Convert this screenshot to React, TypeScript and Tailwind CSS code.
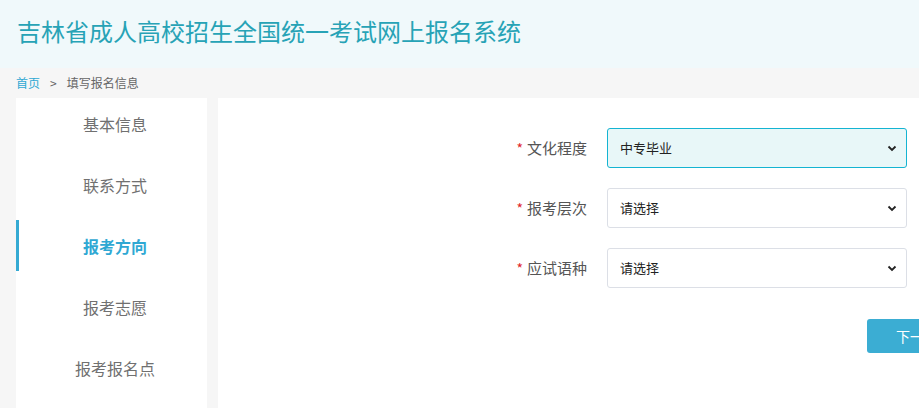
const font = { fontFamily: '"Noto Sans CJK SC", "Noto Sans", sans-serif' }

const menu = ['基本信息', '联系方式', '报考方向', '报考志愿', '报考报名点']

function Chevron() {
  return (
    <svg width="10" height="7" viewBox="0 0 10 7" className="shrink-0">
      <polyline points="1.5,1.5 5,5 8.5,1.5" fill="none" stroke="#222" strokeWidth="1.8" />
    </svg>
  )
}

function Field({ label, value, focused }: { label: string; value: string; focused?: boolean }) {
  return (
    <div className="flex items-center h-[40px] mb-[20px]">
      <div className="w-[120px] shrink-0 pr-[20px] text-right text-[15px] text-[#555]">
        <span className="text-[#e0262b] mr-[4px] text-[14px]">*</span>
        {label}
      </div>
      <div
        className={
          focused
            ? 'w-[300px] h-[40px] shrink-0 flex items-center justify-between pl-[12px] pr-[9px] rounded-[3px] border border-[#14b4d2] bg-[#e8f7f8] text-[13px] text-[#222]'
            : 'w-[300px] h-[40px] shrink-0 flex items-center justify-between pl-[12px] pr-[9px] rounded-[3px] border border-[#dcdfe6] bg-white text-[13px] text-[#222]'
        }
      >
        <span>{value}</span>
        <Chevron />
      </div>
    </div>
  )
}

export default function App() {
  return (
    <div className="w-screen h-screen overflow-hidden bg-[#f6f6f6]" style={font}>
      <div className="h-[68px] bg-[#f0f9fb] pl-[17px] pt-[17px]">
        <h1 className="text-[24px] leading-[28px] text-[#27a3b6]">吉林省成人高校招生全国统一考试网上报名系统</h1>
      </div>

      <div className="h-[30px] flex items-center pl-[16px] text-[12px]">
        <span className="text-[#2fa8d3]">首页</span>
        <span className="text-[#666] mx-[10px]">&gt;</span>
        <span className="text-[#666]">填写报名信息</span>
      </div>

      <div className="flex gap-[11px] pl-[16px] h-[310px]">
        <div className="w-[191px] shrink-0 bg-white">
          {menu.map((item, i) => (
            <div
              key={item}
              className={
                i === 2
                  ? 'h-[51px] mb-[10px] flex items-center justify-center border-l-[3px] border-[#35aad3] pl-[4px] text-[16px] font-bold text-[#2fa8d3]'
                  : 'h-[51px] mb-[10px] flex items-center justify-center pl-[7px] text-[16px] text-[#707070]'
              }
            >
              {item}
            </div>
          ))}
        </div>

        <div className="flex-1 bg-white pl-[269px] pt-[30px] min-w-[760px]">
          <Field label="文化程度" value="中专毕业" focused />
          <Field label="报考层次" value="请选择" />
          <Field label="应试语种" value="请选择" />
          <div className="flex mt-[31px]">
            <div className="w-[380px] shrink-0" />
            <button className="w-[100px] h-[34px] shrink-0 rounded-[3px] bg-[#3badd3] text-white text-[14px]">
              下一步
            </button>
          </div>
        </div>
      </div>
    </div>
  )
}
